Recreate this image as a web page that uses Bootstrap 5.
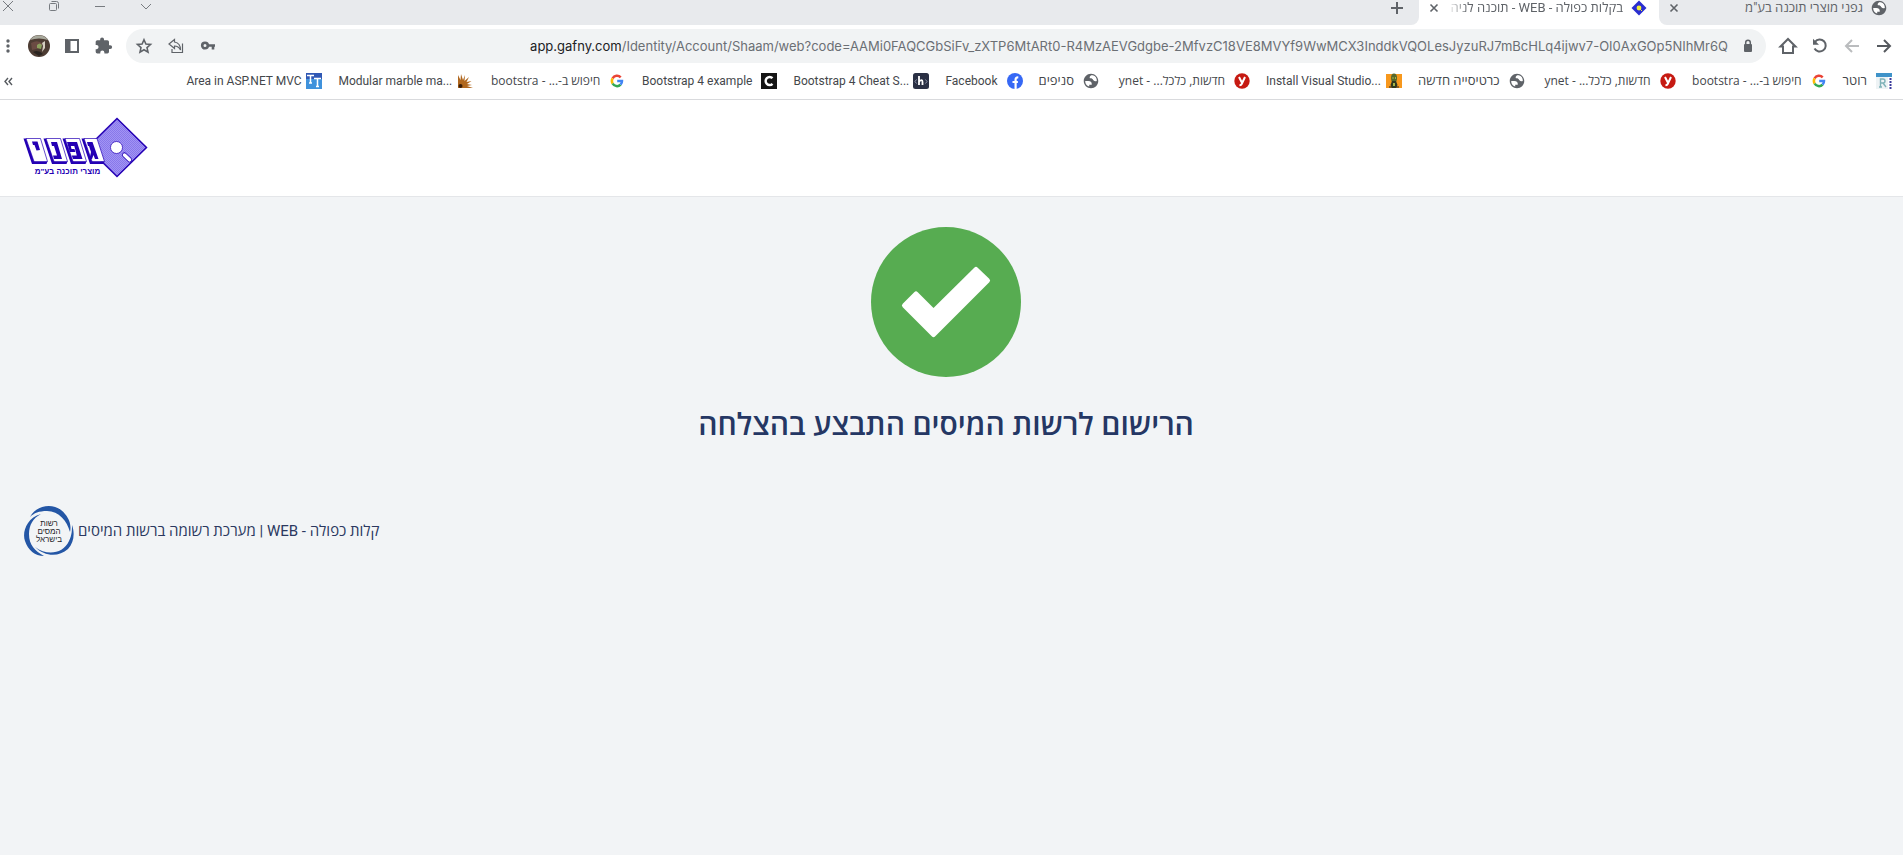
<!DOCTYPE html>
<html lang="he" dir="rtl">
<head>
<meta charset="utf-8">
<meta name="viewport" content="width=device-width, initial-scale=1">
<title>בקלות כפולה - WEB</title>
<link href="https://cdn.jsdelivr.net/npm/bootstrap@5.3.0/dist/css/bootstrap.min.css" rel="stylesheet">
<style>
  body { background: #f2f4f6; color: #2b3860; font-family: Roboto, "Open Sans", sans-serif; }
  button { border: 0; background: none; padding: 0; color: inherit; }
  svg { display: block; flex: none; }
  .browser-ui { color: #5f6368; background: #fff; border-bottom: 1px solid #d9dadd; }

  .tab-strip { height: 25px; background: #fff; }
  .tab-item { width: 240px; height: 25px; padding: 0 12px 9px 10px; font-size: 13px; line-height: 16px; }
  .tab-first { width: 244px; padding-right: 16px; background: #e8eaed; border-bottom-left-radius: 8px; }
  .tab-label { color: #5f6368; text-decoration: none; white-space: nowrap; }
  .tab-fade { -webkit-mask-image: linear-gradient(to left, #000 88%, transparent); mask-image: linear-gradient(to left, #000 88%, transparent); }
  .strip-rest { background: #e8eaed; border-bottom-right-radius: 8px; height: 25px; padding: 0 15px 9px 1px; }
  .window-keys { gap: 32px; padding-bottom: 3px; }

  .tool-bar { gap: 12px; padding: 4px 9px 0 0; }
  .address { height: 34px; border-radius: 17px; background: #f1f3f4; gap: 12px; padding: 0 10px 0 8px; min-width: 0; }
  .url-text { font-family: Inter, "Noto Sans", sans-serif; font-size: 13px; line-height: 20px; white-space: nowrap; color: #6b6f74; text-decoration: none; }
  .url-text span { color: #202124; }
  .avatar { width: 22px; height: 22px; }

  .bookmarks { height: 36px; padding: 0 11px 0 4px; gap: 16px; }
  .bookmark { gap: 9px; font-size: 12px; line-height: 16px; color: #44474b; text-decoration: none; white-space: nowrap; }
  .bookmark span { text-align: right; }
  .bookmark-he { font-size: 13px; }
  .bookmark-long span { width: 111px; }
  .bookmark-mixed { font-family: "Open Sans", sans-serif; }
  .bookmark-mixed span { width: 110px; }

  .site-header { height: 97px; background: #fff; border-bottom: 1px solid #e4e6e9; padding: 0 22px; }
  .result { padding: 30px 11px 0 0; }
  .result h1 { font-size: 30px; line-height: 40px; font-weight: 600; color: #253764; margin: 28px 0 0; }
  .site-footer { padding: 61px 0 0 24px; font-size: 15px; gap: 4px; }
</style>
</head>
<body>
<svg width="0" height="0" class="position-absolute" aria-hidden="true">
  <defs>
    <symbol id="globe" viewBox="1 1 22 22"><circle cx="12" cy="12" r="9" fill="#fff"/><path fill="#5f6368" d="M12 2C6.480 2 2 6.480 2 12s4.480 10 10 10 10-4.480 10-10S17.520 2 12 2zM4 12h4.400c3.400.020 4.950 1.730 4.640 5.130h-3.500v2.450A8 8 0 0 1 4 12zm9.100-3.550c-1.300-.700-2.900.550-2.900-1.400 0-1.300.800-2 2-2.900l2.300-.000A8 8 0 0 1 20 12c-2 .900-3.600.500-4.600-.900-.700-1-1-2-2.300-2.650z"/></symbol>
    <symbol id="google" viewBox="0 0 16 16"><g fill="none" stroke-width="2.500"><path d="M3.600 5.400A5 5 0 0 1 11.700 4.400" stroke="#ea4335"/><path d="M3.600 10.500a5 5 0 0 1 0-5.100" stroke="#fbbc05"/><path d="M11.600 11.600a5 5 0 0 1-8-1.100" stroke="#34a853"/><path d="M8.200 8h4.800a5 5 0 0 1-1.400 3.600" stroke="#4285f4"/></g></symbol>
    <symbol id="ynet" viewBox="0 0 16 16"><circle cx="8" cy="8" r="7.700" fill="#c61a12"/><path d="M5 4l3.100 6M11 4L7.700 11q-.6 1.300-2.200 1.100" fill="none" stroke="#fff" stroke-width="2"/></symbol>
    <symbol id="cross" viewBox="0 0 10 10"><path d="M1.500 1.500l7 7M8.500 1.500l-7 7" stroke="#5f6368" stroke-width="1.600"/></symbol>
  </defs>
</svg>

<div class="browser-ui">
  <div class="d-flex tab-strip">
    <div class="tab-item tab-first d-flex align-items-center">
      <svg width="16" height="16"><use href="#globe"/></svg>
      <a href="#" class="tab-label flex-grow-1 px-2">גפני מוצרי תוכנה בע"מ</a>
      <button aria-label="סגירה"><svg width="10" height="10"><use href="#cross"/></svg></button>
    </div>
    <div class="tab-item d-flex align-items-center">
      <svg width="16" height="16" viewBox="0 0 16 16"><path d="M8 .5L15.500 8 8 15.500.5 8z" fill="#2a2ed0"/><circle cx="8" cy="8" r="2.400" fill="#f3ee3a"/><path d="M9 9l2 2" stroke="#f3ee3a"/></svg>
      <a href="#" class="tab-label tab-fade flex-grow-1 mx-2">בקלות כפולה - WEB - תוכנה לניה</a>
      <button aria-label="סגירה"><svg width="10" height="10"><use href="#cross"/></svg></button>
    </div>
    <div class="strip-rest d-flex flex-grow-1 align-items-center justify-content-between">
      <button aria-label="כרטיסייה חדשה"><svg width="14" height="14" viewBox="0 0 14 14"><path d="M7 1v12M1 7h12" stroke="#5f6368" stroke-width="2"/></svg></button>
      <div class="window-keys d-flex align-items-center">
        <button aria-label="חיפוש כרטיסיות"><svg width="14" height="14" viewBox="0 0 14 14"><path d="M2 4l5 5 5-5" fill="none" stroke="#777b80"/></svg></button>
        <button aria-label="מזעור"><svg width="14" height="14" viewBox="0 0 14 14"><path d="M2 6.500h10" stroke="#777b80"/></svg></button>
        <button aria-label="שחזור"><svg width="14" height="14" viewBox="0 0 14 14"><rect x="2.500" y="3.500" width="7" height="7" rx="1" fill="none" stroke="#777b80"/><path d="M4.500 1.500h5a2 2 0 0 1 2 2v5" fill="none" stroke="#777b80"/></svg></button>
        <button aria-label="סגירת החלון"><svg width="14" height="14" viewBox="0 0 14 14"><path d="M2 1l10 10M12 1L2 11" stroke="#777b80"/></svg></button>
      </div>
    </div>
  </div>

  <div class="tool-bar d-flex align-items-center">
    <button aria-label="קדימה"><svg width="20" height="20" viewBox="0 0 20 20"><path d="M3 10h13M10 4l6 6-6 6" fill="none" stroke="#55595e" stroke-width="2"/></svg></button>
    <button aria-label="אחורה"><svg width="20" height="20" viewBox="0 0 20 20"><path d="M17 10H4M10 4l-6 6 6 6" fill="none" stroke="#babcbe" stroke-width="2"/></svg></button>
    <button aria-label="רענון"><svg width="20" height="20" viewBox="0 0 20 20"><path d="M5 5.800A6 6 0 1 1 4.500 12.500" fill="none" stroke="#5f6368" stroke-width="2"/><path d="M3 2.800v6h6z" fill="#5f6368"/></svg></button>
    <button aria-label="דף הבית"><svg width="20" height="20" viewBox="0 0 20 20"><path d="M2.500 10.500L10 3l7.500 7.500H15v6.500H5v-6.500z" fill="none" stroke="#5f6368" stroke-width="2"/></svg></button>
    <div class="address d-flex align-items-center flex-grow-1">
      <svg width="16" height="16" viewBox="0 0 16 16"><rect x="4" y="6" width="8" height="8" rx="1" fill="#5f6368"/><path d="M5.700 6.500V4.500a2.300 2.300 0 0 1 4.600 0v2" fill="none" stroke="#5f6368" stroke-width="1.500"/></svg>
      <a href="#" class="url-text" dir="ltr"><span>app.gafny.com</span>/Identity/Account/Shaam/web?code=AAMi0FAQCGbSiFv_zXTP6MtARt0-R4MzAEVGdgbe-2MfvzC18VE8MVYf9WwMCX3InddkVQOLesJyzuRJ7mBcHLq4ijwv7-OI0AxGOp5NIhMr6Q</a>
      <div class="flex-grow-1"></div>
      <button aria-label="סיסמאות"><svg width="20" height="20" viewBox="0 0 20 20"><circle cx="7" cy="9.500" r="2.800" fill="none" stroke="#5f6368" stroke-width="2.600"/><path d="M10 9.500h7M15 9.500v4" stroke="#5f6368" stroke-width="2.600" fill="none"/></svg></button>
      <button aria-label="שיתוף"><svg width="20" height="20" viewBox="0 0 20 20"><path d="M8.500 3.500L3 8l5.500 4.500V10q4 0 6 4 0-7-6-8zM6 13v3.500h10.500V7.500" fill="none" stroke="#5f6368" stroke-width="1.200"/></svg></button>
      <button aria-label="סימנייה"><svg width="20" height="20" viewBox="0 0 20 20"><path d="M10 3.800l1.900 4.300 4.600.4-3.500 3.100 1 4.600-4-2.400-4 2.400 1-4.600-3.500-3.100 4.600-.4z" fill="none" stroke="#5f6368" stroke-width="1.600"/></svg></button>
    </div>
    <button aria-label="תוספים"><svg width="20" height="20" viewBox="1 0 24 24"><path d="M20.500 11H19V7a2 2 0 0 0-2-2h-4V4a2.300 2.300 0 0 0-4.600 0v1H5a2 2 0 0 0-2 2v3.800h1a2.500 2.500 0 0 1 0 5H3V19a2 2 0 0 0 2 2h3.500v-1a2.500 2.500 0 0 1 5 0v1H17a2 2 0 0 0 2-2v-3.500h1.500a2.250 2.250 0 0 0 0-4.500z" fill="#5f6368"/></svg></button>
    <button aria-label="חלונית צד"><svg width="20" height="20" viewBox="0 0 20 20"><path d="M3 3h14v14H3zM8.500 5v10H15V5z" fill="#5f6368" fill-rule="evenodd"/></svg></button>
    <button aria-label="פרופיל"><svg class="avatar" viewBox="0 0 22 22"><circle cx="11" cy="11" r="11" fill="#4d3c33"/><path d="M2 5a11 11 0 0 1 18 0q-9-3-18 0z" fill="#a8a99c"/><path d="M3 8q7-4 12 1l-3 4-8 2z" fill="#6b4b43"/><path d="M9 10q3-3 5 0l-1 4-4-1z" fill="#8ca05e"/><path d="M14 8l3-2v7l-3 4 1-6z" fill="#d6cec1"/><path d="M5 17q5-3 10 2l-4 2z" fill="#2a2420"/></svg></button>
    <button aria-label="תפריט"><svg width="16" height="20" viewBox="0 0 16 20"><g fill="#5f6368"><circle cx="8" cy="5" r="1.700"/><circle cx="8" cy="10" r="1.700"/><circle cx="8" cy="15" r="1.700"/></g></svg></button>
  </div>

  <nav class="bookmarks d-flex align-items-center" aria-label="סימניות">
    <a href="#" class="bookmark bookmark-he d-flex align-items-center"><svg width="16" height="16" viewBox="0 0 16 16"><path d="M0 0h16v4H0z" fill="#3f93c9"/><path d="M0 4h12v12H0z" fill="#eef3f5"/><path d="M4.500 14v-8H7a2 2 0 0 1 0 4H4.500M7 10l3 4M3 14h3" fill="none" stroke="#7fb2b8" stroke-width="1.400"/><path d="M14.500 5v11" stroke="#3a3a9c" stroke-width="2" stroke-dasharray="2 1"/></svg><span>רוטר</span></a>
    <a href="#" class="bookmark bookmark-mixed d-flex align-items-center"><svg width="16" height="16"><use href="#google"/></svg><span>חיפוש ב-... - bootstra</span></a>
    <a href="#" class="bookmark bookmark-mixed d-flex align-items-center"><svg width="16" height="16"><use href="#ynet"/></svg><span>חדשות, כלכל... - ynet</span></a>
    <a href="#" class="bookmark bookmark-he d-flex align-items-center"><svg width="16" height="16"><use href="#globe"/></svg><span>כרטיסייה חדשה</span></a>
    <a href="#" class="bookmark bookmark-long d-flex align-items-center"><svg width="16" height="16" viewBox="0 0 16 16"><path d="M0 1h16v14H0z" fill="#f7981d"/><ellipse cx="8" cy="5" rx="3" ry="4.500" fill="#56682c"/><path d="M6 8h4l1.500 4-1.500 3H6l-1.500-3z" fill="#30391f"/><path d="M6.500 4h1v2h-1zM9 4h1v2H9zM7 10h2v3H7z" fill="#a7b545"/><path d="M3 14h3M10 14h3" stroke="#222"/></svg><span dir="ltr">Install Visual Studio...</span></a>
    <a href="#" class="bookmark bookmark-mixed d-flex align-items-center"><svg width="16" height="16"><use href="#ynet"/></svg><span>חדשות, כלכל... - ynet</span></a>
    <a href="#" class="bookmark bookmark-he d-flex align-items-center"><svg width="16" height="16"><use href="#globe"/></svg><span>סניפים</span></a>
    <a href="#" class="bookmark d-flex align-items-center"><svg width="16" height="16" viewBox="0 0 16 16"><circle cx="8" cy="8" r="8" fill="#3668f5"/><path d="M8.600 16V6.400q0-2.200 2.700-1.900M5.500 9h5.400" fill="none" stroke="#fff" stroke-width="2.200"/></svg><span>Facebook</span></a>
    <a href="#" class="bookmark bookmark-long d-flex align-items-center"><svg width="16" height="16" viewBox="0 0 16 16"><rect width="16" height="16" rx="2.500" fill="#2a3044"/><path d="M6 3v9M6 8.500Q9.500 5.500 9.500 9v3" fill="none" stroke="#fff" stroke-width="1.800"/><path d="M3.500 6.500L2 8.500l1.500 2M12.500 6.500l1.500 2-1.500 2" fill="none" stroke="#8a90a8"/></svg><span dir="ltr">Bootstrap 4 Cheat S...</span></a>
    <a href="#" class="bookmark bookmark-long d-flex align-items-center"><svg width="16" height="16" viewBox="0 0 16 16"><path d="M0 0h16v16H0z" fill="#151515"/><path d="M11.500 5.200A4 4 0 1 0 11.500 10.800" fill="none" stroke="#fff" stroke-width="2.400"/></svg><span dir="ltr">Bootstrap 4 example</span></a>
    <a href="#" class="bookmark bookmark-mixed d-flex align-items-center"><svg width="16" height="16"><use href="#google"/></svg><span>חיפוש ב-... - bootstra</span></a>
    <a href="#" class="bookmark bookmark-long d-flex align-items-center"><svg width="16" height="16" viewBox="0 0 16 16"><path d="M0 2l2.500 5L3 1l2 6 2-5-.5 6L11 4 8.500 9l5-1-4.500 3 5 1-5 1 6 2H0z" fill="#b0671e"/><circle cx="2.500" cy="13" r="2" fill="#3a1d08"/></svg><span dir="ltr">Modular marble ma...</span></a>
    <a href="#" class="bookmark bookmark-long d-flex align-items-center"><svg width="16" height="16" viewBox="0 0 16 16"><path d="M0 0h16v16H0z" fill="#3f92dc"/><path d="M0 0h16v6H0z" fill="#3058b4"/><path d="M1 2.500h7M4.500 2v8M3 10h3M8 5.500h7M11.500 5v8.500M10 13.500h3" stroke="#fff" stroke-width="1.500"/></svg><span dir="ltr">Area in ASP.NET MVC</span></a>
    <button class="me-auto" aria-label="סימניות נוספות"><svg width="9" height="9" viewBox="0 0 9 9"><path d="M4 1L1 4.500 4 8M8 1L5 4.500 8 8" fill="none" stroke="#55595e" stroke-width="1.400"/></svg></button>
  </nav>
</div>

<header class="site-header d-flex align-items-center justify-content-end">
  <a href="#" aria-label="גפני מוצרי תוכנה">
    <svg width="126" height="64" viewBox="22 116 126 64" direction="ltr">
      <defs><pattern id="weave" width="2" height="2" patternUnits="userSpaceOnUse"><path d="M0 0h2v2H0z" fill="#a294f4"/><path d="M0 0h1v1H0zM1 1h1v1H1z" fill="#8878ea"/></pattern></defs>
      <path d="M117 118.500l29.500 29-29.500 29-29.500-29z" fill="url(#weave)" stroke="#2400b4" stroke-width="1.500"/>
      <circle cx="116.500" cy="147.500" r="6" fill="#fff" stroke="#2400b4" stroke-width=".7"/>
      <path d="M124.500 155l5 4.800" stroke="#2400b4" stroke-width="5" stroke-linecap="round"/><path d="M124.500 155l5 4.800" stroke="#fff" stroke-width="3.500" stroke-linecap="round"/>
      <g fill="#2400b4"><path d="M23.500 138.500h3l8 23h13l-1 2.500H32zM43.500 138.500h3l8 23h13l-1 2.500H52zM62.500 138.500h3l8 23h13l-1 2.500H71zM81.500 138.500h3l8 23h12l-1 2.500H90z"/></g>
      <g fill="#fff" stroke="#2400b4" stroke-width=".7"><path d="M26 138.500h14.500l7 23H34zM46 138.500h14.500l7 23H54zM65 138.500h14.500l7 23H73zM84 138.500h13l7.500 23H92z"/></g>
      <g fill="#2400b4"><path d="M32 141.500h5.500l2.500 8.500-3.500.5-2-5.500H33zM51 142h6l5 17h-8l-1-3.500h4l-3-9.500h-2zM67 142h10l5.500 17H73l-1.200-3.500h5l-2.500-9.500h-3.500l.7 3h3l.8 3h-5.500zM87 142h5.500l6 17H95l-1.500-4-1.500 4h-2.500l1.500-7-2-6H88z"/></g>
      <text x="67.500" y="174" text-anchor="middle" direction="rtl" font-family="Liberation Sans, DejaVu Sans, sans-serif" font-weight="700" font-size="8" fill="#2400b4">מוצרי תוכנה בע"מ</text>
    </svg>
  </a>
</header>

<main class="result d-flex flex-column align-items-center">
  <svg width="150" height="150" viewBox="0 0 150 150" role="img" aria-label="הצלחה"><circle cx="75" cy="75" r="75" fill="#57ac51"/><path d="M33.500 78.500L45 67 62.500 84.500 105 42.500 116.500 53.500 62.500 107.500z" fill="#fff" stroke="#fff" stroke-width="5" stroke-linejoin="round"/></svg>
  <h1>הרישום לרשות המיסים התבצע בהצלחה</h1>
</main>

<footer class="site-footer d-flex align-items-center justify-content-end">
  <span>קלות כפולה - WEB | מערכת רשומה ברשות המיסים</span>
  <svg width="50" height="50" viewBox="0 0 50 50"><g fill="#2456a5"><path d="M6 11C13-2 32-4 41 8c6 7 6 14 5 18C43 15 35 5 23 5 15 5 10 7 6 11z"/><path d="M17 8C2 12-2 27 1 35c3 9 10 15 19 15C11 45 5 39 5 28 5 19 9 12 17 8z"/><path d="M11 41c12 9 28 7 34-6 3-6 3-11 3-16 3 8 2 18-4 24-9 8-23 8-33-2z"/></g>
    <g fill="#26262a" font-family="Liberation Sans, sans-serif" font-size="8" text-anchor="middle" direction="rtl"><text x="25" y="20">רשות</text><text x="25" y="28">המסים</text><text x="25" y="36">בישראל</text></g></svg>
</footer>
<script src="https://cdn.jsdelivr.net/npm/bootstrap@5.3.0/dist/js/bootstrap.bundle.min.js"></script>
</body>
</html>
